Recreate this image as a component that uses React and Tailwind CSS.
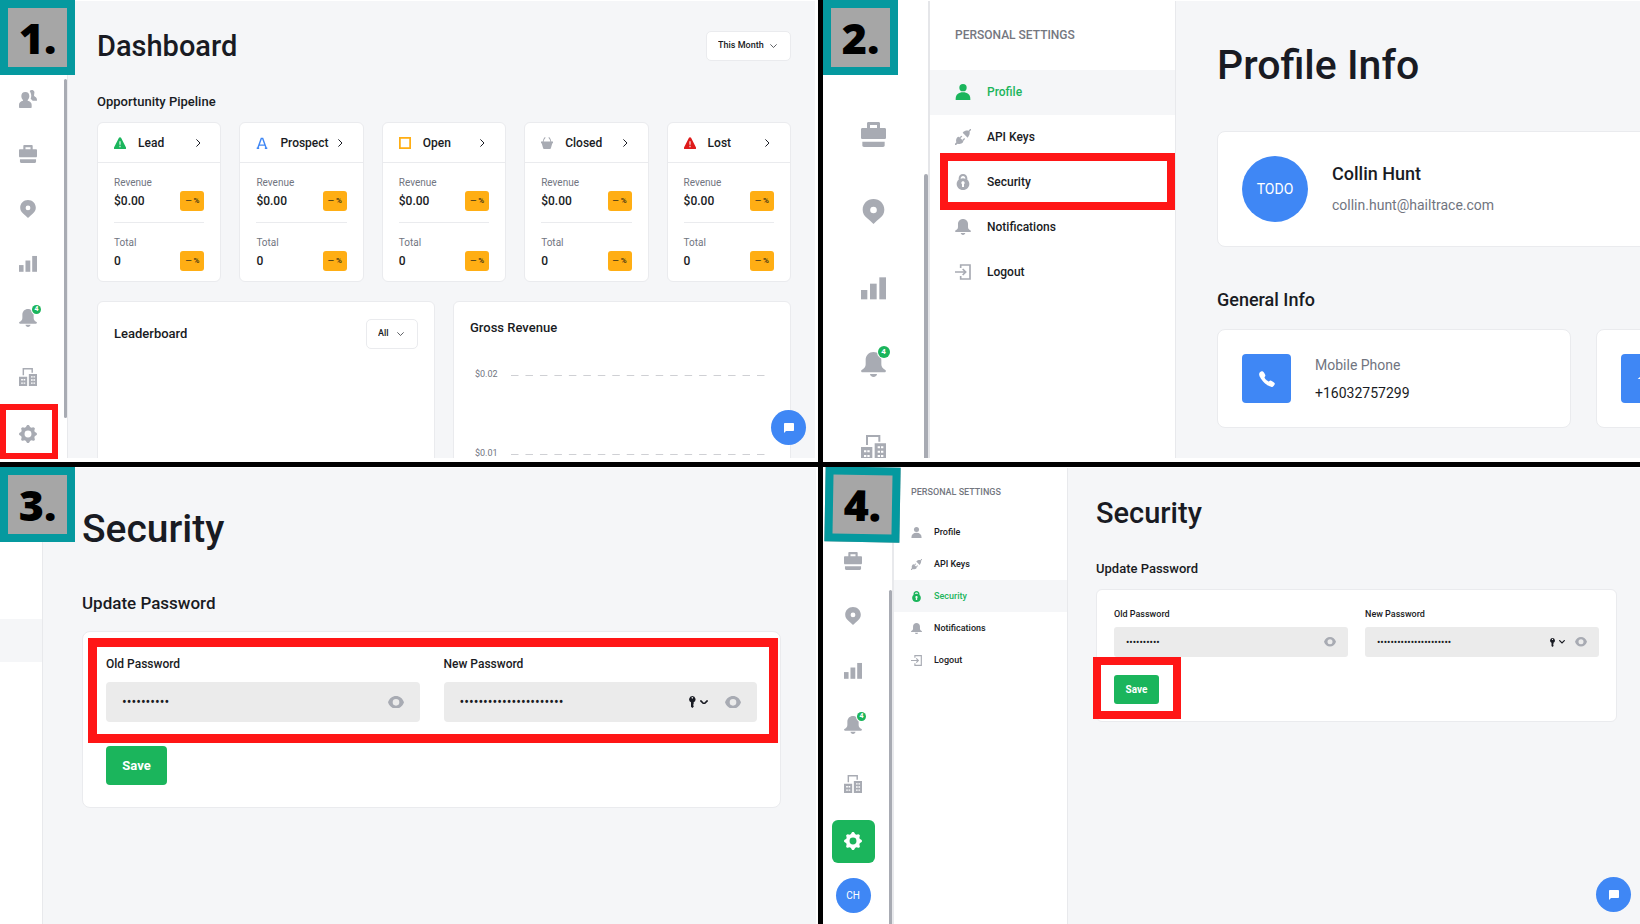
import React from 'react';
import { MdChatBubble, MdHome } from 'react-icons/md';
import { IoCall } from 'react-icons/io5';
import clsx from 'clsx';

/* ---------- Icons ---------- */

const PeopleIcon = ({ className }) => (
  <svg viewBox="0 0 54 54" className={className} fill="currentColor">
    <path d="M32 3c3-4 12-4 14 2 1 5-1 8-1 12l3 3c4 2 6 4 6 12H41c-2-3-4-4-6-6 3-8 2-15-3-23z" />
    <path d="M19 6c8 0 12 5 12 12 0 5-2 9-5 12v2c7 2 12 5 12 12v8c0 1-1 2-2 2H2c-1 0-2-1-2-2v-8c0-7 5-10 12-12v-2c-3-3-5-7-5-12C7 11 11 6 19 6z" />
  </svg>
);

const BriefcaseIcon = ({ className }) => (
  <svg viewBox="0 0 75 75" className={className} fill="currentColor">
    <path
      fillRule="evenodd"
      d="M22 0h31c2 0 4 2 4 4v14h14c2 0 4 2 4 4v25c0 2-2 4-4 4H4c-2 0-4-2-4-4V22c0-2 2-4 4-4h14V4c0-2 2-4 4-4zm5 9v9h21V9z"
    />
    <path d="M4 59h67v11c0 3-2 5-5 5H9c-3 0-5-2-5-5z" />
  </svg>
);

const PinIcon = ({ className }) => (
  <svg viewBox="0 0 75 75" className={className} fill="currentColor">
    <path
      fillRule="evenodd"
      d="M37.500 0C19 0 5 14 5 32c0 11 5 18 12 24 7 6 14 12 20.500 19C44 68 51 62 58 56c7-6 12-13 12-24C70 14 56 0 37.500 0zm0 23a10 10 0 1 1 0 20 10 10 0 0 1 0-20z"
    />
  </svg>
);

const BarsIcon = ({ className }) => (
  <svg viewBox="0 0 75 75" className={className} fill="currentColor">
    <rect x="0" y="42" width="19" height="28" />
    <rect x="27" y="23" width="20" height="47" />
    <rect x="55" y="4" width="20" height="66" />
  </svg>
);

const BellIcon = ({ className }) => (
  <svg viewBox="0 0 75 75" className={className} fill="currentColor">
    <path d="M37.500 0C24 0 14 10 14 24v13c0 8-4 12-12 17-3 2-2 7 2 7h67c4 0 5-5 2-7-8-5-12-9-12-17V24C61 10 51 0 37.500 0z" />
    <path d="M27 66h21c0 5-5 9-10.500 9S27 71 27 66z" />
  </svg>
);

const BuildingsIcon = ({ className }) => (
  <svg viewBox="0 0 75 75" className={className} fill="currentColor">
    <path d="M15 0h43v20h-6V6H21v24h-6z" />
    <path
      fillRule="evenodd"
      d="M0 36h34v39H0zm9 10v6h7v-6zm10 0v6h7v-6zM9 60v6h7v-6zm10 0v6h7v-6z"
    />
    <path
      fillRule="evenodd"
      d="M41 25h34v50H41zm9 9v6h7v-6zm10 0v6h7v-6zM50 47v6h7v-6zm10 0v6h7v-6zM50 60v6h7v-6zm10 0v6h7v-6z"
    />
  </svg>
);

const GearIcon = ({ className }) => (
  <svg viewBox="0 0 52 52" className={className} fill="currentColor">
    <circle cx="26" cy="26" r="15" fill="none" stroke="currentColor" strokeWidth="10" />
    {[0, 45, 90, 135, 180, 225, 270, 315].map((angle) => (
      <path key={angle} d="M18 9 23 1c1-1 5-1 6 0l5 8z" transform={`rotate(${angle} 26 26)`} />
    ))}
  </svg>
);

const PersonIcon = ({ className }) => (
  <svg viewBox="0 0 48 48" className={className} fill="currentColor">
    <circle cx="24" cy="11" r="11" />
    <path d="M2 48v-4c0-12 9-19 22-19s22 7 22 19v4z" />
  </svg>
);

const PlugIcon = ({ className }) => (
  <svg viewBox="0 0 48 48" className={className} fill="currentColor">
    <path d="M48 0v4l-4 3c1 8-1 13-6 19L23 11c6-6 11-7 18-6l4-5z" />
    <path d="M0 48v-4l4-4c-2-7 0-12 4-16l4-1 13 13-1 4c-4 4-9 6-16 4l-5 4z" />
    <path d="m14 25 5-5 3 2-5 6zM22 32l6-5 2 3-5 6z" />
  </svg>
);

const LockIcon = ({ className }) => (
  <svg viewBox="0 0 48 48" className={className} fill="currentColor">
    <path
      fillRule="evenodd"
      d="M24 0c-8 0-13 6-13 13v4C7 20 5 25 5 30c0 10 8 18 19 18s19-8 19-18c0-5-2-10-6-13v-4C37 6 32 0 24 0zm0 6c4 0 7 3 7 7v1c-4-2-10-2-14 0v-1c0-4 3-7 7-7zm0 16c3 0 5 2 5 5 0 2-1 3-2 4v8h-6v-8c-1-1-2-2-2-4 0-3 2-5 5-5z"
    />
  </svg>
);

const LogoutIcon = ({ className }) => (
  <svg viewBox="0 0 48 48" className={className} fill="none" stroke="currentColor" strokeWidth="5">
    <path d="M17 12V3h28v42H17v-9" />
    <path d="M0 24h31M23 15l9 9-9 9" />
  </svg>
);

const EyeIcon = ({ className }) => (
  <svg viewBox="0 0 48 38" className={className} fill="currentColor">
    <path
      fillRule="evenodd"
      d="M24 0C13 0 4 7 0 19c4 12 13 19 24 19s20-7 24-19C44 7 35 0 24 0zm0 9a10 10 0 1 1 0 20 10 10 0 0 1 0-20z"
    />
  </svg>
);

const KeyIcon = ({ className }) => (
  <svg viewBox="0 0 20 36" className={className} fill="currentColor">
    <path
      fillRule="evenodd"
      d="M10 0a10 10 0 0 1 4 19v6l-2 2 2 2v3l-4 4-4-4V19a10 10 0 0 1 4-19zm0 3a2 2 0 1 0 0 5 2 2 0 0 0 0-5z"
    />
  </svg>
);

const Chevron = ({ className, width = 2 }) => (
  <svg viewBox="0 0 20 12" className={className} fill="none" stroke="currentColor" strokeWidth={width}>
    <path d="m1 1 9 9 9-9" />
  </svg>
);

const ChevronRight = ({ className }) => (
  <svg viewBox="0 0 12 20" className={className} fill="none" stroke="currentColor" strokeWidth="2.500">
    <path d="m1 1 9 9-9 9" />
  </svg>
);

const WarningIcon = ({ className }) => (
  <svg viewBox="0 0 34 34" className={className} fill="currentColor">
    <path d="M14 2c1-2 5-2 6 0l14 28c1 2 0 4-2 4H2c-2 0-3-2-2-4z" />
    <path d="M17 12v10M17 25v4" stroke="white" strokeWidth="3" />
  </svg>
);

const CompassIcon = ({ className }) => (
  <svg viewBox="0 0 34 34" className={className} fill="none" stroke="currentColor" strokeWidth="4">
    <path d="M5 32 15 4h4l10 28M9 23h16M2 32h7M25 32h7" />
  </svg>
);

const SquareIcon = ({ className }) => (
  <svg viewBox="0 0 34 34" className={className} fill="none" stroke="currentColor" strokeWidth="5">
    <rect x="2.500" y="2.500" width="29" height="29" />
  </svg>
);

const BasketIcon = ({ className }) => (
  <svg viewBox="0 0 34 34" className={className} fill="currentColor">
    <path d="M0 13h34v5h-2l-4 14c0 1-1 2-3 2H9c-2 0-3-1-3-2L2 18H0z" />
    <path d="M6 14C6 9 8 5 12 1M28 14c0-5-2-9-6-13" fill="none" stroke="currentColor" strokeWidth="3" />
  </svg>
);

/* ---------- Shared pieces ---------- */

const StepBadge = ({ number, className }) => (
  <div
    className={clsx(
      'absolute top-0 left-0 z-10 flex size-[75px] items-center justify-center border-8 border-[#05999f] bg-[#a6a6a6] font-["Open_Sans",sans-serif] text-[43px] leading-none font-extrabold text-black',
      className
    )}
  >
    {number}.
  </div>
);

const Highlight = ({ className }) => (
  <div className={clsx('pointer-events-none absolute border-[#ff1616]', className)}></div>
);

const ChatButton = ({ className }) => (
  <button
    type="button"
    aria-label="Open chat"
    className={clsx(
      'absolute flex size-[35px] items-center justify-center rounded-full bg-[#3f87f5] text-white',
      className
    )}
  >
    <MdChatBubble className="size-3" />
  </button>
);

const railIcons = {
  people: PeopleIcon,
  briefcase: BriefcaseIcon,
  map: PinIcon,
  stats: BarsIcon,
  alerts: BellIcon,
  company: BuildingsIcon,
  settings: GearIcon,
};

const RailItem = ({ name, large, active, highlight }) => {
  const Icon = railIcons[name];
  const height = large
    ? { alerts: 'h-[75px]', company: 'h-[91px]' }[name] || 'h-[77px]'
    : { alerts: 'h-[53px]', company: 'h-[65px]', settings: 'h-[50px]' }[name] || 'h-[55px]';

  return (
    <a href="#" aria-label={name} className={clsx('relative flex w-full shrink-0 items-center justify-center', height)}>
      <span
        className={clsx(
          'relative flex items-center justify-center',
          active ? 'size-[43px] rounded-md bg-[#1bb55c] text-white' : 'text-[#a8abb3]'
        )}
      >
        <Icon className={large ? 'size-[25px]' : 'size-[18px]'} />
        {name === 'alerts' && (
          <span
            className={clsx(
              'absolute flex items-center justify-center rounded-full bg-[#1bb55c] font-bold text-white ring-1 ring-white',
              large ? '-top-1.5 -right-1 size-3 text-[8px]' : '-top-1 -right-1 size-[9px] text-[7px]'
            )}
          >
            4
          </span>
        )}
      </span>
      {highlight && <Highlight className="-top-[5px] -right-0.5 bottom-0 left-0 border-[6px]" />}
    </a>
  );
};

const menuItems = [
  { label: 'Profile', icon: PersonIcon },
  { label: 'API Keys', icon: PlugIcon },
  { label: 'Security', icon: LockIcon },
  { label: 'Notifications', icon: BellIcon },
  { label: 'Logout', icon: LogoutIcon },
];

const SettingsMenu = ({ large, active, highlight }) => (
  <aside
    className={clsx(
      'shrink-0 border-r border-[#e8e9ec] bg-white font-medium',
      large ? 'w-[246px] pt-[26px] text-[12px]' : 'w-[174px] pt-[18px] text-[9px]'
    )}
  >
    <h2 className={clsx('text-[#74777f]', large ? 'pl-[25px] leading-4' : 'pl-[17px] leading-3')}>
      PERSONAL SETTINGS
    </h2>
    <nav className={large ? 'mt-[27px]' : 'mt-[18px]'}>
      {menuItems.map(({ label, icon: Icon }) => (
        <a
          key={label}
          href="#"
          className={clsx(
            'relative flex items-center',
            large ? 'h-[45px] gap-4 pb-0.5 pl-[25px] leading-4' : 'h-8 gap-3 pl-[17px] leading-3',
            label === active && 'bg-[#f5f6f8] text-[#1bb55c]'
          )}
        >
          <Icon className={clsx(large ? 'size-4' : 'size-[11px]', label !== active && 'text-[#a8abb3]')} />
          {label}
          {label === highlight && <Highlight className="-top-[7px] right-0 -bottom-[5px] left-2.5 border-8" />}
        </a>
      ))}
    </nav>
  </aside>
);

const PasswordField = ({ id, label, value, large, suggest }) => (
  <div className="min-w-0 flex-1">
    <label htmlFor={id} className={clsx('block font-medium', large ? 'text-[12px] leading-4' : 'text-[9px] leading-3')}>
      {label}
    </label>
    <div
      className={clsx(
        'flex items-center bg-[#ebebeb]',
        large ? 'mt-2.5 h-10 rounded px-4' : 'mt-[7px] h-[30px] rounded-[3px] px-3'
      )}
    >
      <input
        id={id}
        type="password"
        defaultValue={value}
        className={clsx('min-w-0 flex-1 bg-transparent outline-none', large ? 'text-[14px]' : 'text-[10px]')}
      />
      {suggest && (
        <span className={clsx('flex items-center gap-1', large ? 'mr-[17px]' : 'mr-2.5')}>
          <KeyIcon className={large ? 'h-3' : 'h-[9px]'} />
          <Chevron className={large ? 'w-2' : 'w-1.5'} width={4} />
        </span>
      )}
      <button type="button" aria-label={`Show ${label}`} className="text-[#a8abb3]">
        <EyeIcon className={large ? 'w-4' : 'w-3'} />
      </button>
    </div>
  </div>
);

const SecurityForm = ({ prefix, large, highlight }) => (
  <main
    className={clsx(
      'min-w-0 flex-1 bg-[#f5f6f8]',
      large ? 'pt-[37px] pr-[35px] pl-[39px]' : 'pt-[25px] pr-[23px] pl-7'
    )}
  >
    <h1 className={clsx('font-medium', large ? 'text-[39px] leading-[48px]' : 'text-[29px] leading-10')}>Security</h1>
    <h2 className={clsx('font-medium', large ? 'mt-[38px] text-[17px] leading-6' : 'mt-[26px] text-[13px] leading-5')}>
      Update Password
    </h2>
    <form
      className={clsx(
        'border border-[#eaebee] bg-white',
        large ? 'mt-4 rounded-lg px-[23px] pt-6 pb-[22px]' : 'mt-2.5 rounded-md p-[17px] pt-[18px]'
      )}
    >
      <div className={clsx('relative flex', large ? 'gap-6' : 'gap-[17px]')}>
        <PasswordField id={`${prefix}-old`} label="Old Password" value="password12" large={large} />
        <PasswordField id={`${prefix}-new`} label="New Password" value="correcthorsebattery123" large={large} suggest />
        {highlight === 'fields' && (
          <Highlight className="-top-[18px] -right-[21px] -bottom-[21px] -left-[18px] border-[9px]" />
        )}
      </div>
      <div className={clsx('relative w-fit', large ? 'mt-6' : 'mt-[18px]')}>
        <button
          type="button"
          className={clsx(
            'block bg-[#1bb55c] font-bold text-white',
            large ? 'h-[39px] w-[61px] rounded text-[13px]' : 'h-[29px] w-[45px] rounded-[3px] text-[10px]'
          )}
        >
          Save
        </button>
        {highlight === 'save' && (
          <Highlight className="-top-[18px] -right-[22px] -bottom-[15px] -left-[21px] border-8" />
        )}
      </div>
    </form>
  </main>
);

/* ---------- Step 1: dashboard ---------- */

const stages = [
  { name: 'Lead', icon: WarningIcon, color: 'text-[#1bb55c]' },
  { name: 'Prospect', icon: CompassIcon, color: 'text-[#3f87f5]' },
  { name: 'Open', icon: SquareIcon, color: 'text-[#ffae14]' },
  { name: 'Closed', icon: BasketIcon, color: 'text-[#a8abb3]' },
  { name: 'Lost', icon: WarningIcon, color: 'text-[#de1b1b]' },
];

const Metric = ({ label, value }) => (
  <div className="pt-3">
    <p className="text-[10px] leading-4 text-[#71757f]">{label}</p>
    <div className="flex h-5 items-center justify-between">
      <span className="text-[12px] leading-5 font-medium">{value}</span>
      <span className="flex h-5 w-6 items-center justify-center rounded-[3px] bg-[#ffae14] text-[8px] font-bold text-[#4a3a14]">
        — %
      </span>
    </div>
  </div>
);

const StageCard = ({ name, icon: Icon, color }) => (
  <div className="min-w-0 rounded-md border border-[#eaebee] bg-white pb-2.5">
    <div className="flex h-10 items-center border-b border-[#eaebee] px-4">
      <Icon className={clsx('size-3 shrink-0', color)} />
      <span className="ml-3 flex-1 text-[12px] leading-5 font-medium">{name}</span>
      <ChevronRight className="mr-1 h-2" />
    </div>
    <div className="px-4">
      <Metric label="Revenue" value="$0.00" />
      <div className="mt-[11px] border-t border-[#eaebee]"></div>
      <Metric label="Total" value="0" />
    </div>
  </div>
);

const FilterSelect = ({ label, option, className }) => (
  <div className="relative">
    <select
      aria-label={label}
      className={clsx(
        'block h-[30px] appearance-none rounded-[5px] border border-[#eaebee] bg-white pl-[11px] text-[9px] font-medium outline-none',
        className
      )}
    >
      <option>{option}</option>
    </select>
    <Chevron className="pointer-events-none absolute top-[13px] right-3.5 w-[7px]" width={2} />
  </div>
);

const ChartLine = ({ label }) => (
  <div className="flex h-4 items-center pr-[9px] pl-[5px]">
    <span className="w-9 text-[9px] text-[#71757f]">{label}</span>
    <svg className="h-px min-w-0 flex-1">
      <line x1="0" y1="0.500" x2="100%" y2="0.500" stroke="#cfd0d4" strokeWidth="1" strokeDasharray="7.500 6.970" />
    </svg>
  </div>
);

const DashboardPanel = () => (
  <section className="relative flex overflow-hidden bg-white pt-px pr-[3px] pb-1">
    <StepBadge number={1} />
    <div className="relative w-[68px] shrink-0 border-r border-[#e8e9ec] pt-[70px] pr-[11px]">
      <RailItem name="people" />
      <RailItem name="briefcase" />
      <RailItem name="map" />
      <RailItem name="stats" />
      <RailItem name="alerts" />
      <RailItem name="company" />
      <RailItem name="settings" highlight />
      <div className="absolute top-[78px] right-0 bottom-10 w-[3px] rounded-full bg-[#a8abb3]"></div>
    </div>
    <main className="min-w-0 flex-1 overflow-hidden bg-[#f5f6f8] pt-[25px] pr-6 pl-[29px]">
      <div className="flex h-10 items-center justify-between">
        <h1 className="text-[29px] leading-10 font-medium">Dashboard</h1>
        <FilterSelect label="Period" option="This Month" className="w-[85px]" />
      </div>
      <h2 className="mt-[26px] text-[13px] leading-5 font-medium">Opportunity Pipeline</h2>
      <div className="mt-2.5 grid grid-cols-5 gap-[18px]">
        {stages.map((stage) => (
          <StageCard key={stage.name} {...stage} />
        ))}
      </div>
      <div className="mt-[19px] grid h-[320px] grid-cols-2 gap-[18px]">
        <div className="flex items-start justify-between rounded-md border border-[#eaebee] bg-white px-4 pt-[17px]">
          <h2 className="text-[13px] leading-[29px] font-medium">Leaderboard</h2>
          <FilterSelect label="Team" option="All" className="w-[52px]" />
        </div>
        <div className="rounded-md border border-[#eaebee] bg-white px-4 pt-4">
          <h2 className="text-[13px] leading-5 font-medium">Gross Revenue</h2>
          <div className="mt-[29px] space-y-[63px]">
            <ChartLine label="$0.02" />
            <ChartLine label="$0.01" />
          </div>
        </div>
      </div>
    </main>
    <ChatButton className="right-3 bottom-[17px]" />
  </section>
);

/* ---------- Step 2: profile ---------- */

const ProfilePanel = () => (
  <section className="relative flex overflow-hidden bg-white pt-px pb-1">
    <StepBadge number={2} />
    <div className="relative w-[107px] shrink-0 overflow-hidden border-r-2 border-[#e5e6e9] pt-[95px] pr-[5px]">
      <RailItem name="briefcase" large />
      <RailItem name="map" large />
      <RailItem name="stats" large />
      <RailItem name="alerts" large />
      <RailItem name="company" large />
      <div className="absolute top-[173px] right-0 bottom-0 w-1 rounded-t-full bg-[#a8abb3]"></div>
    </div>
    <SettingsMenu large active="Profile" highlight="Security" />
    <main className="min-w-0 flex-1 overflow-hidden bg-[#f5f6f8] pt-10 pl-[41px]">
      <h1 className="text-[41px] leading-[48px] font-medium">Profile Info</h1>
      <div className="mt-[42px] flex w-[733px] items-center gap-6 rounded-lg border border-[#eaebee] bg-white p-6">
        <div className="flex size-[66px] items-center justify-center rounded-full bg-[#3f87f5] text-[14px] text-white">
          TODO
        </div>
        <div className="space-y-[7px] pt-px">
          <p className="text-[18px] leading-6 font-medium">Collin Hunt</p>
          <p className="text-[14px] leading-6 text-[#71757f]">collin.hunt@hailtrace.com</p>
        </div>
      </div>
      <h2 className="mt-[41px] text-[18px] leading-6 font-medium">General Info</h2>
      <div className="mt-[17px] grid w-[733px] grid-cols-2 gap-[25px]">
        <div className="flex items-center gap-6 rounded-lg border border-[#eaebee] bg-white p-6">
          <div className="flex size-[49px] items-center justify-center rounded bg-[#3f87f5] text-white">
            <IoCall className="size-[18px]" />
          </div>
          <div className="space-y-2 text-[14px] leading-5">
            <p className="text-[#71757f]">Mobile Phone</p>
            <p>+16032757299</p>
          </div>
        </div>
        <div className="flex items-center rounded-lg border border-[#eaebee] bg-white p-6">
          <div className="flex size-[49px] items-center justify-center rounded bg-[#3f87f5] text-white">
            <MdHome className="size-5" />
          </div>
        </div>
      </div>
    </main>
  </section>
);

/* ---------- Step 3: passwords ---------- */

const PasswordPanel = () => (
  <section className="relative flex overflow-hidden bg-white pt-px pr-0.5">
    <StepBadge number={3} />
    <div className="w-[43px] shrink-0 border-r border-[#e8e9ec] pt-[151px]">
      <div className="h-[43px] bg-[#f5f6f8]"></div>
    </div>
    <SecurityForm prefix="edit" large highlight="fields" />
  </section>
);

/* ---------- Step 4: save ---------- */

const SavePanel = () => (
  <section className="relative flex overflow-hidden bg-white pt-px">
    <StepBadge number={4} className="ml-0.5 rotate-1" />
    <div className="relative w-[71px] shrink-0 border-r-2 border-[#e8e9ec] pt-[65px] pr-[9px]">
      <RailItem name="briefcase" />
      <RailItem name="map" />
      <RailItem name="stats" />
      <RailItem name="alerts" />
      <RailItem name="company" />
      <RailItem name="settings" active />
      <div className="mx-auto mt-3 flex size-[35px] items-center justify-center rounded-full bg-[#3f87f5] text-[10px] text-white">
        CH
      </div>
      <div className="absolute top-[122px] right-0 bottom-0 w-[3px] rounded-t-full bg-[#a8abb3]"></div>
    </div>
    <SettingsMenu active="Security" />
    <SecurityForm prefix="save" highlight="save" />
    <ChatButton className="right-[9px] bottom-3" />
  </section>
);

const App = () => {
  return (
    <div className="grid h-screen grid-cols-[minmax(0,818fr)_minmax(0,817fr)] grid-rows-[minmax(0,462fr)_minmax(0,457fr)] gap-[5px] bg-black font-[Roboto,sans-serif] text-[#191b23]">
      <DashboardPanel />
      <ProfilePanel />
      <PasswordPanel />
      <SavePanel />
    </div>
  );
};

export default App;
